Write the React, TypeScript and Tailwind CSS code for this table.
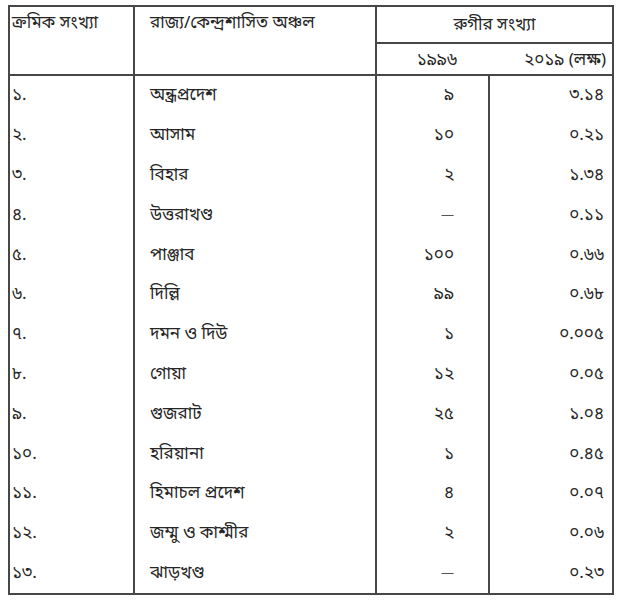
const rows = [
  { n: "১.", name: "অন্ধ্রপ্রদেশ", a: "৯", b: "৩.১৪" },
  { n: "২.", name: "আসাম", a: "১০", b: "০.২১" },
  { n: "৩.", name: "বিহার", a: "২", b: "১.৩৪" },
  { n: "৪.", name: "উত্তরাখণ্ড", a: "—", b: "০.১১" },
  { n: "৫.", name: "পাঞ্জাব", a: "১০০", b: "০.৬৬" },
  { n: "৬.", name: "দিল্লি", a: "৯৯", b: "০.৬৮" },
  { n: "৭.", name: "দমন ও দিউ", a: "১", b: "০.০০৫" },
  { n: "৮.", name: "গোয়া", a: "১২", b: "০.০৫" },
  { n: "৯.", name: "গুজরাট", a: "২৫", b: "১.০৪" },
  { n: "১০.", name: "হরিয়ানা", a: "১", b: "০.৪৫" },
  { n: "১১.", name: "হিমাচল প্রদেশ", a: "৪", b: "০.০৭" },
  { n: "১২.", name: "জম্মু ও কাশ্মীর", a: "২", b: "০.০৬" },
  { n: "১৩.", name: "ঝাড়খণ্ড", a: "—", b: "০.২৩" },
]

export default function App() {
  return (
    <div
      className="w-[624px] h-[605px] bg-white pt-[5px] pl-[8px] text-[#262626] text-[17px] leading-none"
      style={{ fontFamily: '"Noto Sans Bengali", "Noto Sans", sans-serif' }}
    >
      <div className="w-[606px] border-2 border-[#474747]">
        <div className="flex h-[69px] border-b-2 border-[#474747]">
          <div className="w-[125px] border-r-2 border-[#474747] pl-[2px] pt-[8px]">ক্রমিক সংখ্যা</div>
          <div className="w-[242px] border-r-2 border-[#474747] pl-[15px] pt-[8px]">রাজ্য/কেন্দ্রশাসিত অঞ্চল</div>
          <div className="flex flex-1 flex-col">
            <div className="h-[37px] border-b-2 border-[#474747] pt-[10px] text-center">রুগীর সংখ্যা</div>
            <div className="flex flex-1 items-center pt-[2px]">
              <div className="w-[113px] pr-[33px] text-right">১৯৯৬</div>
              <div className="flex-1 pr-[6px] text-right">২০১৯ (লক্ষ)</div>
            </div>
          </div>
        </div>
        {rows.map((r) => (
          <div key={r.n} className="flex h-[39.8px] items-center">
            <div className="flex h-full w-[125px] items-center border-r-2 border-[#474747] pl-[2px]">{r.n}</div>
            <div className="flex h-full w-[242px] items-center border-r-2 border-[#474747] pl-[15px]">{r.name}</div>
            <div className="flex h-full w-[113px] items-center justify-end border-r-2 border-[#474747] pr-[34px]">
              {r.a === "—" ? <span className="text-[13px] text-[#555]">—</span> : r.a}
            </div>
            <div className="flex h-full flex-1 items-center justify-end pr-[8px]">{r.b}</div>
          </div>
        ))}
      </div>
    </div>
  )
}
